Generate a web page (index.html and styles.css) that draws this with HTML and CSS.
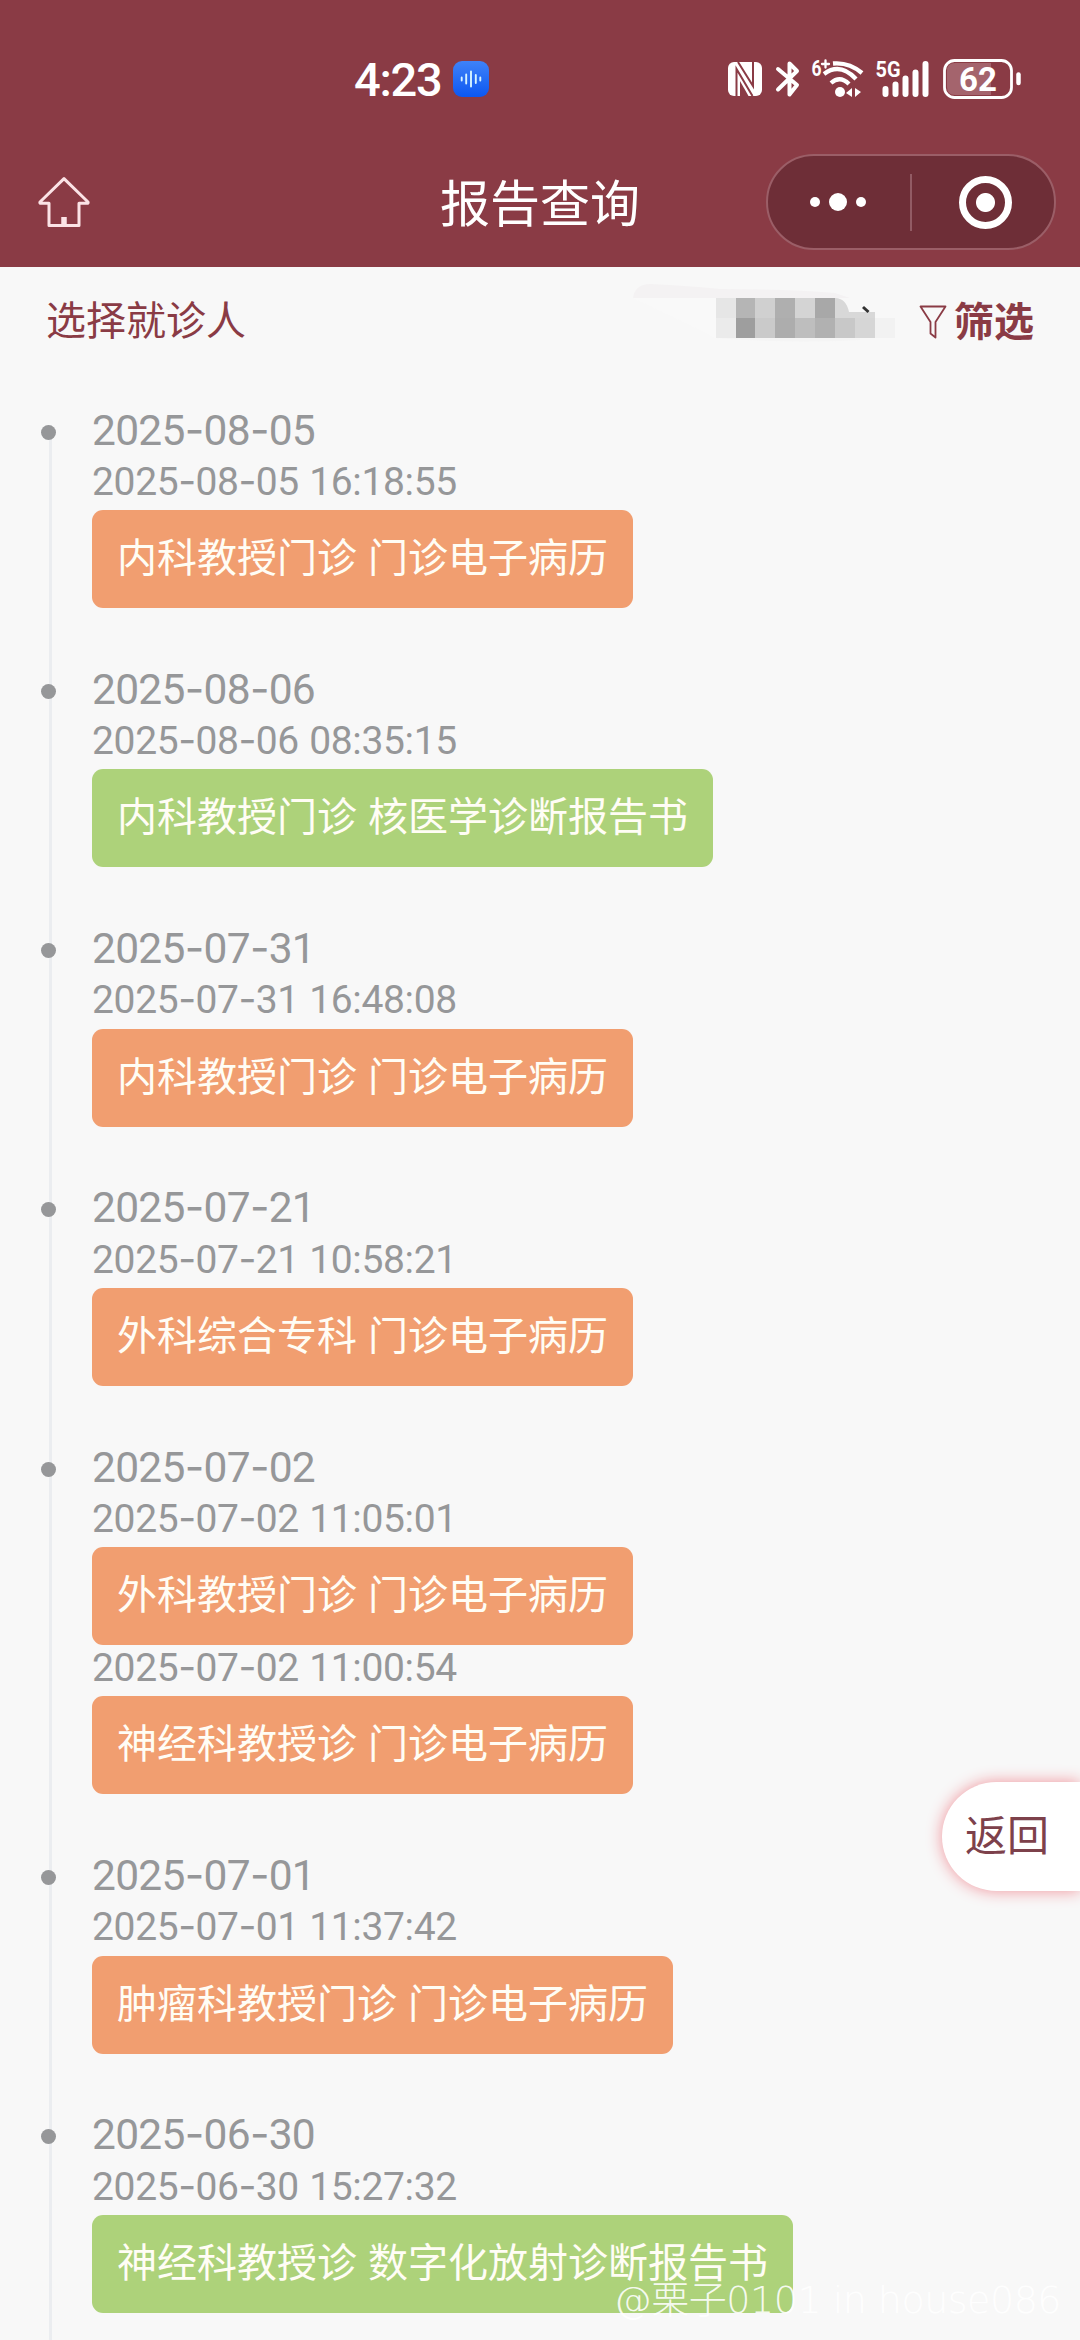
FILE: index.html
```html
<!DOCTYPE html>
<html lang="zh-CN">
<head>
<meta charset="utf-8">
<title>报告查询</title>
<link rel="stylesheet" href="styles.css">
</head>
<body>
<div class="page">
  <header class="header">
    <div class="status">
      <span class="clock">4:23</span>
      <svg class="app-icon" width="36" height="36" viewBox="0 0 36 36">
        <defs><linearGradient id="blue" x1="0" y1="0" x2="0" y2="1"><stop offset="0" stop-color="#3f82f8"/><stop offset="1" stop-color="#0b57f2"/></linearGradient></defs>
        <rect width="36" height="36" rx="9" fill="url(#blue)"/>
        <path d="M8.7 16.500v3M13.200 13.500v9M18 10.500v15M22.800 14v8M27.300 16.500v3" stroke="#d6f3ff" stroke-width="1.900" stroke-linecap="round"/>
      </svg>
      <svg class="status-icons" width="330" height="80" viewBox="0 0 330 80" fill="none" stroke="#fff" stroke-linecap="round">
        <rect x="18" y="22" width="34" height="34" rx="6" fill="#fff" stroke="none"/>
        <path d="M26.500 56V29L42.500 56M28 22L43 46V22" stroke="#8a3b45" stroke-width="2" stroke-linecap="butt"/>
        <path d="M30 41V56H38.500Z" fill="#8a3b45" stroke="none"/>
        <path d="M68 29L87 45L79.500 54.500V23.500L87 31L68 49.500" stroke-width="4" stroke-linejoin="round"/>
        <text class="net-tag" x="101.500" y="36" textLength="10" lengthAdjust="spacingAndGlyphs">6</text>
        <path d="M112 24H119M115.500 20.500V27.500" stroke-width="2.300"/>
        <path d="M123 23.500Q139 22 152 33M114 34Q130 22 146 39M121 43Q130 35 139 44" stroke-width="4.300" stroke-linecap="butt"/>
        <circle cx="130" cy="52" r="5" fill="#fff" stroke="none"/>
        <path d="M136 53L142 48V57M142 53H136ZM145 48V57L151 52Z" fill="#fff" stroke="none"/>
        <text class="net-tag" x="165.500" y="37" textLength="25" lengthAdjust="spacingAndGlyphs">5G</text>
        <path d="M175.500 49V54M185.500 44.500V54M195.500 38.500V54M205.500 32.500V54M215.500 24V54" stroke-width="6"/>
        <rect x="234.500" y="20.500" width="67" height="37" rx="10" stroke-width="2.800"/>
        <path d="M245 23H281V55H245Q237 55 237 47V31Q237 23 245 23Z" fill="#a4646d" stroke="none"/>
        <path d="M308.500 34.500V43" stroke-width="4.500"/>
        <text class="battery" x="268" y="51" text-anchor="middle">62</text>
      </svg>
    </div>
    <div class="navbar">
      <svg class="home" width="52" height="50" viewBox="0 0 52 50" fill="none" stroke="#fbe3e6" stroke-width="3" stroke-linejoin="round" stroke-linecap="round">
        <path d="M26 1.700L50 25Q50.500 26.300 49 26.300H41V48.500H11V26.300H3Q1.500 26.300 2 25Z"/>
        <path d="M26 40V47" stroke-width="5.500" stroke-linecap="butt"/>
      </svg>
      <h1 class="title">报告查询</h1>
      <div class="capsule">
        <span class="more"><i class="dot"></i><i class="dot dot-large"></i><i class="dot"></i></span>
        <span class="divider"></span>
        <span class="close"><i class="ring"></i></span>
      </div>
    </div>
  </header>

  <div class="toolbar">
    <span class="patient-label">选择就诊人</span>
    <svg class="masked" width="280" height="80" viewBox="0 0 280 80">
      <path d="M13 28Q15 14 30 14Q70 16 100 19Q170 19 215 23L230 28Z" fill="#f4f2f3"/>
      <path d="M96 68H240V70Q170 74 96 68Z" fill="#f5f5f5"/>
      <path d="M13 28H96V68Q60 50 13 28Z" fill="#f9f9f9"/>
      <g shape-rendering="crispEdges">
        <path d="M96 28h20v20h-20z" fill="#e6e6e6"/><path d="M116 28h19v20h-19z" fill="#b5b5b5"/>
        <path d="M135 28h20v20h-20z" fill="#d0d0d0"/><path d="M155 28h20v20h-20z" fill="#afafaf"/>
        <path d="M175 28h20v20h-20z" fill="#d4d4d4"/><path d="M195 28h20v20h-20z" fill="#a8a8a8"/>
        <path d="M96 48h20v20h-20z" fill="#ebebeb"/><path d="M116 48h19v20h-19z" fill="#9e9e9e"/>
        <path d="M135 48h20v20h-20z" fill="#cacaca"/><path d="M155 48h20v20h-20z" fill="#adadad"/>
        <path d="M175 48h20v20h-20z" fill="#bebebe"/><path d="M195 48h20v20h-20z" fill="#b1b1b1"/>
        <path d="M215 48h20v20h-20z" fill="#c8c8c8"/><path d="M235 48h20v20h-20z" fill="#d6d6d6"/>
        <path d="M255 48h20v20h-20z" fill="#f2f2f2"/>
      </g>
      <path d="M215 28Q226 28 229 42H255V48H215Z" fill="#d8d8d8"/>
      <path d="M243 37L248.500 42" stroke="#333" stroke-width="3" fill="none"/>
    </svg>
    <svg class="funnel" width="28" height="34" viewBox="0 0 28 34" fill="none" stroke="#8a3b45" stroke-width="1.800" stroke-linejoin="round">
      <path d="M1.500 1.500H26.500L16.500 17V32.500L11.500 28.500V17Z"/>
    </svg>
    <span class="filter">筛选</span>
  </div>

  <main class="timeline">
    <section class="day">
      <h2 class="date">2025<b>-</b>08<b>-</b>05</h2>
      <div class="time">2025<b>-</b>08<b>-</b>05 16:18:55</div>
      <a class="report">内科教授门诊 门诊电子病历</a>
    </section>
    <section class="day">
      <h2 class="date">2025<b>-</b>08<b>-</b>06</h2>
      <div class="time">2025<b>-</b>08<b>-</b>06 08:35:15</div>
      <a class="report report-green">内科教授门诊 核医学诊断报告书</a>
    </section>
    <section class="day">
      <h2 class="date">2025<b>-</b>07<b>-</b>31</h2>
      <div class="time">2025<b>-</b>07<b>-</b>31 16:48:08</div>
      <a class="report">内科教授门诊 门诊电子病历</a>
    </section>
    <section class="day">
      <h2 class="date">2025<b>-</b>07<b>-</b>21</h2>
      <div class="time">2025<b>-</b>07<b>-</b>21 10:58:21</div>
      <a class="report">外科综合专科 门诊电子病历</a>
    </section>
    <section class="day">
      <h2 class="date">2025<b>-</b>07<b>-</b>02</h2>
      <div class="time">2025<b>-</b>07<b>-</b>02 11:05:01</div>
      <a class="report">外科教授门诊 门诊电子病历</a>
      <div class="time">2025<b>-</b>07<b>-</b>02 11:00:54</div>
      <a class="report">神经科教授诊 门诊电子病历</a>
    </section>
    <section class="day">
      <h2 class="date">2025<b>-</b>07<b>-</b>01</h2>
      <div class="time">2025<b>-</b>07<b>-</b>01 11:37:42</div>
      <a class="report">肿瘤科教授门诊 门诊电子病历</a>
    </section>
    <section class="day">
      <h2 class="date">2025<b>-</b>06<b>-</b>30</h2>
      <div class="time">2025<b>-</b>06<b>-</b>30 15:27:32</div>
      <a class="report report-green">神经科教授诊 数字化放射诊断报告书</a>
    </section>
  </main>

  <a class="back">返回</a>
  <div class="watermark">@栗子0101 in house086</div>
</div>
</body>
</html>
```

FILE: styles.css
```css
* { box-sizing: border-box; }

body {
  margin: 0;
  background: #f8f8f8;
  font-family: "Noto Sans CJK SC", sans-serif;
}

.page {
  position: relative;
  display: flex;
  flex-direction: column;
  width: 1080px;
  height: 2340px;
  overflow: hidden;
}

.header {
  flex: none;
  height: 267px;
  background: #8a3b45;
  color: #fff;
}

.status {
  display: flex;
  align-items: center;
  height: 137px;
  padding: 23px 40px 0 354px;
}

.clock {
  width: 99px;
  font-family: Roboto, sans-serif;
  font-size: 47px;
  font-weight: 500;
  letter-spacing: -1.3px;
  line-height: 50px;
}

.app-icon { margin-top: -2px; }

.status-icons { margin-left: auto; }

.net-tag {
  font-family: Roboto, sans-serif;
  font-size: 22px;
  font-weight: 700;
  fill: #fff;
  stroke: none;
}

.battery {
  font-family: Roboto, sans-serif;
  font-size: 33px;
  font-weight: 700;
  fill: #fff;
  stroke: none;
}

.navbar {
  display: grid;
  grid-template-columns: 1fr auto 1fr;
  align-items: center;
  height: 130px;
  padding: 0 24px 0 38px;
}

.title {
  margin: -5px 14px 0 0;
  font-size: 50px;
  font-weight: 400;
  line-height: 70px;
}

.capsule {
  justify-self: end;
  display: flex;
  align-items: center;
  width: 290px;
  height: 96px;
  border: 2px solid #9b5e67;
  border-radius: 48px;
  background: #6e2e37;
}

.more,
.close {
  flex: 0 0 142px;
  display: flex;
  align-items: center;
  justify-content: center;
  gap: 9px;
}

.more { padding-right: 2px; }

.close { padding-left: 5px; }

.dot {
  width: 10px;
  height: 10px;
  border-radius: 50%;
  background: #fff;
}

.dot-large { width: 18px; height: 18px; }

.divider {
  width: 2px;
  height: 57px;
  background: #925b64;
}

.ring {
  width: 53px;
  height: 53px;
  border: 7px solid #fff;
  border-radius: 50%;
  background: radial-gradient(circle, #fff 9px, transparent 10px);
}

.toolbar {
  flex: none;
  display: flex;
  align-items: center;
  height: 106px;
  padding: 0 46px;
  color: #8a3b45;
  font-size: 40px;
  line-height: 60px;
}

.patient-label { margin-top: -4px; }

.masked { margin: -20px 18px 0 auto; }

.funnel { margin: 4px 7px 0 1px; }

.filter { font-weight: 700; margin-top: -3px; }

.timeline {
  position: relative;
  flex: none;
  padding: 23.5px 0 0 92px;
}

.timeline::before {
  content: "";
  position: absolute;
  top: 52px;
  bottom: 0;
  left: 49px;
  width: 3px;
  background: #ebedf0;
}

.day {
  position: relative;
  display: flex;
  flex-direction: column;
  align-items: flex-start;
  padding-bottom: 47.75px;
}

.day::before {
  content: "";
  position: absolute;
  top: 28px;
  left: -51px;
  width: 15px;
  height: 15px;
  border-radius: 50%;
  background: #969799;
}

.date {
  margin: 6px 0 0.25px;
  color: #969799;
  font-family: Roboto, sans-serif;
  font-size: 42.5px;
  font-weight: 400;
  letter-spacing: -0.7px;
  line-height: 56px;
}

.time {
  margin-bottom: 5.25px;
  color: #969799;
  font-family: Roboto, sans-serif;
  font-size: 39px;
  letter-spacing: -0.35px;
  word-spacing: 1px;
  line-height: 46px;
  white-space: pre;
}

.date b,
.time b {
  font-family: Inter, sans-serif;
  font-weight: 400;
  letter-spacing: -0.8px;
  line-height: 0;
}

.report {
  height: 98px;
  padding: 24px 25px 0;
  border-radius: 11px;
  background: #f19e70;
  color: #fffdf5;
  font-size: 40px;
  line-height: 42px;
  white-space: pre;
  word-spacing: 2px;
}

.report-green { background: #add27a; }

.back {
  position: absolute;
  top: 1782px;
  right: 0;
  width: 138px;
  height: 109px;
  padding-left: 23px;
  border-radius: 55px 0 0 55px;
  background: #fff;
  box-shadow: 0 0 16px #f0929a;
  color: #7d414b;
  font-size: 42px;
  line-height: 102px;
}

.watermark {
  position: absolute;
  top: 2272px;
  right: 19px;
  color: rgba(255, 255, 255, 0.9);
  font-family: "DejaVu Sans", "Noto Sans CJK SC", sans-serif;
  font-size: 38px;
  font-weight: 200;
  letter-spacing: -0.5px;
  line-height: 56px;
  white-space: nowrap;
}
```
